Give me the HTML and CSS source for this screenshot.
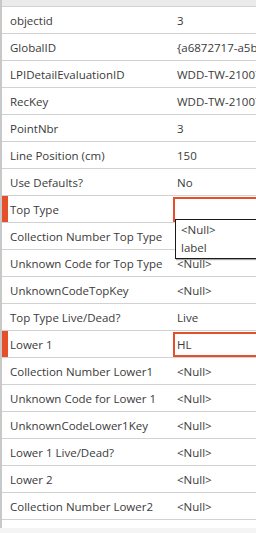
FILE: index.html
```html
<!DOCTYPE html>
<html lang="en">
<head>
  <meta charset="UTF-8">
  <meta name="viewport" content="width=device-width, initial-scale=1.0">
  <title>Attributes</title>
  <link rel="stylesheet" href="styles.css">
</head>
<body>

<!-- Attribute grid -->
<div class="panel">
  <div class="topbar"></div>
  <div class="rows">
    <div class="row"><div class="label">objectid</div><div class="value">3</div></div>
    <div class="row"><div class="label">GlobalID</div><div class="value">{a6872717-a5b6-4c1e</div></div>
    <div class="row"><div class="label">LPIDetailEvaluationID</div><div class="value">WDD-TW-210075</div></div>
    <div class="row"><div class="label">RecKey</div><div class="value">WDD-TW-210075</div></div>
    <div class="row"><div class="label">PointNbr</div><div class="value">3</div></div>
    <div class="row"><div class="label">Line Position (cm)</div><div class="value">150</div></div>
    <div class="row"><div class="label">Use Defaults?</div><div class="value">No</div></div>
    <div class="row required">
      <div class="label">Top Type</div>
      <div class="value editing">
        <span class="input-text"></span>
        <!-- open dropdown list -->
        <ul class="dropdown">
          <li>&lt;Null&gt;</li>
          <li>label</li>
        </ul>
      </div>
    </div>
    <div class="row"><div class="label">Collection Number Top Type</div><div class="value">&lt;Null&gt;</div></div>
    <div class="row"><div class="label">Unknown Code for Top Type</div><div class="value">&lt;Null&gt;</div></div>
    <div class="row"><div class="label">UnknownCodeTopKey</div><div class="value">&lt;Null&gt;</div></div>
    <div class="row"><div class="label">Top Type Live/Dead?</div><div class="value">Live</div></div>
    <div class="row required">
      <div class="label">Lower 1</div>
      <div class="value editing"><span class="input-text">HL</span></div>
    </div>
    <div class="row"><div class="label">Collection Number Lower1</div><div class="value">&lt;Null&gt;</div></div>
    <div class="row"><div class="label">Unknown Code for Lower 1</div><div class="value">&lt;Null&gt;</div></div>
    <div class="row"><div class="label">UnknownCodeLower1Key</div><div class="value">&lt;Null&gt;</div></div>
    <div class="row"><div class="label">Lower 1 Live/Dead?</div><div class="value">&lt;Null&gt;</div></div>
    <div class="row"><div class="label">Lower 2</div><div class="value">&lt;Null&gt;</div></div>
    <div class="row"><div class="label">Collection Number Lower2</div><div class="value">&lt;Null&gt;</div></div>
  </div>
  <div class="bottom-space"></div>
</div>
<div class="bottombar"></div>

</body>
</html>
```

FILE: styles.css
```css
body {
  font-family: "Open Sans", "Noto Sans", Arial, sans-serif;
  font-size: 11.5px;
  margin: 0;
  padding: 0;
  background-color: #fff;
  color: #3a3a3a;
  overflow: hidden;
}
.panel {
  width: 256px;
  border-left: 2px solid #c8c8c8;
  box-sizing: border-box;
}
.topbar {
  height: 6px;
  background-color: #ebebeb;
  border-bottom: 1px solid #d2d2d2;
}
.row {
  display: flex;
  height: 26px;
  border-bottom: 1px solid #d2d2d2;
}
.label {
  width: 163px;
  flex-shrink: 0;
  border-left: 6px solid transparent;
  padding-left: 2px;
  display: flex;
  align-items: center;
  white-space: nowrap;
}
.row.required .label {
  border-left-color: #e5502b;
}
.value {
  flex: 1;
  display: flex;
  align-items: center;
  padding-left: 4px;
  white-space: nowrap;
  overflow: hidden;
}
.value.editing {
  position: relative;
  overflow: visible;
  padding-left: 2px;
  border: 2px solid #e5502b;
  border-right: none;
  margin-top: 1px;
  height: 21px;
}
.dropdown {
  position: absolute;
  top: 20px;
  left: 0;
  width: 100px;
  margin: 0;
  padding: 1px 0 1px 5px;
  list-style: none;
  background-color: #fff;
  border: 1px solid #1a1a1a;
  box-shadow: 1px 1px 1px rgba(0, 0, 0, 0.35);
  z-index: 2;
}
.dropdown li {
  height: 18px;
  line-height: 18px;
}
.bottom-space {
  height: 8px;
}
.bottombar {
  height: 10px;
  background-color: #f4f4f4;
}
```
